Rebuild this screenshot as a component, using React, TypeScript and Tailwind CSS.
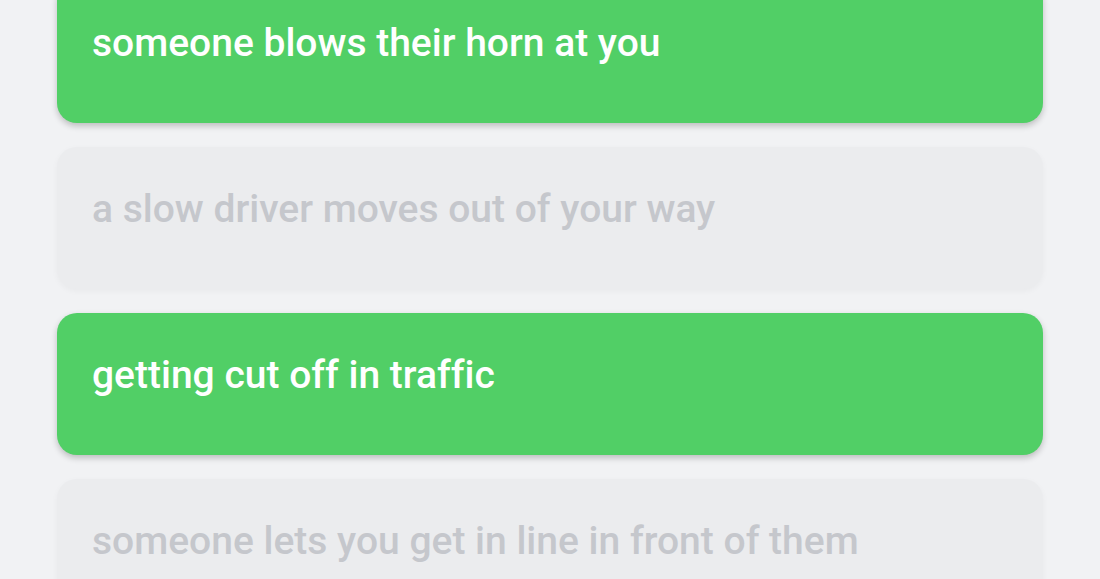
const items = [
  { text: "someone blows their horn at you", active: true },
  { text: "a slow driver moves out of your way", active: false },
  { text: "getting cut off in traffic", active: true },
  { text: "someone lets you get in line in front of them", active: false },
];

export default function App() {
  return (
    <div className="h-[579px] overflow-hidden bg-[#f1f2f4] font-['Roboto',sans-serif]">
      <div className="mx-[57px] mt-[-19px] flex flex-col gap-6">
        {items.map((item) => (
          <div
            key={item.text}
            className={
              item.active
                ? "h-[142px] rounded-[20px] bg-[#51cf66] px-[35px] pt-[38px] text-[39px] font-medium leading-[48px] text-white [font-variant-ligatures:none] shadow-[0_3px_6px_rgba(0,0,0,0.22)]"
                : "h-[142px] rounded-[20px] bg-[#ebecee] px-[35px] pt-[38px] text-[39px] font-medium leading-[48px] text-[#c5c7cc] [font-variant-ligatures:none] shadow-[0_2px_6px_rgba(0,0,0,0.04)]"
            }
          >
            {item.text}
          </div>
        ))}
      </div>
    </div>
  );
}
